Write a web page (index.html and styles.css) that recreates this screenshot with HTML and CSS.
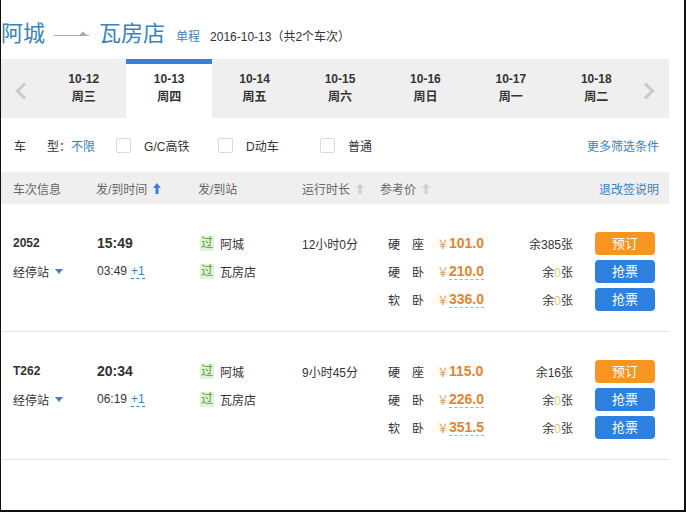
FILE: index.html
```html
<!DOCTYPE html>
<html lang="zh-CN">
<head>
<meta charset="utf-8">
<title>阿城 - 瓦房店</title>
<link rel="stylesheet" href="styles.css">
</head>
<body>
<div class="frame">
  <div class="page">
    <div class="title">
      <span class="city">阿城</span>
      <svg class="route-arrow" width="36" height="12" viewBox="0 0 36 12"><path d="M0 6.5 H35" stroke="#a9a9a9" stroke-width="1"/><path d="M25 6.5 L33 6.5 L29 2.5 Z" fill="#a9a9a9"/></svg>
      <span class="city">瓦房店</span>
      <span class="trip">单程</span>
      <span class="summary">2016-10-13（共2个车次）</span>
    </div>

    <div class="datebar">
      <div class="nav prev"><svg width="12" height="18" viewBox="0 0 12 18"><polyline points="10,1.5 2.5,9 10,16.5" fill="none" stroke="#c9c9c9" stroke-width="3"/></svg></div>
      <div class="day"><span>10-12</span><span>周三</span></div>
      <div class="day active"><span>10-13</span><span>周四</span></div>
      <div class="day"><span>10-14</span><span>周五</span></div>
      <div class="day"><span>10-15</span><span>周六</span></div>
      <div class="day"><span>10-16</span><span>周日</span></div>
      <div class="day"><span>10-17</span><span>周一</span></div>
      <div class="day"><span>10-18</span><span>周二</span></div>
      <div class="nav next"><svg width="12" height="18" viewBox="0 0 12 18"><polyline points="2,1.5 9.5,9 2,16.5" fill="none" stroke="#c9c9c9" stroke-width="3"/></svg></div>
    </div>

    <div class="filter">
      <span class="f-label">车</span><span class="f-label2">型：</span><span class="link">不限</span>
      <label class="opt first"><span class="box"></span>G/C高铁</label>
      <label class="opt"><span class="box"></span>D动车</label>
      <label class="opt"><span class="box"></span>普通</label>
      <span class="link more">更多筛选条件</span>
    </div>

    <div class="thead">
      <div class="c1">车次信息</div>
      <div class="c2">发/到时间<svg class="sort" width="8" height="11" viewBox="0 0 8 11"><path d="M4 0 L8 5 H5.5 V11 H2.5 V5 H0 Z" fill="#3a80d8"/></svg></div>
      <div class="c3">发/到站</div>
      <div class="c4">运行时长<svg class="sort" width="8" height="11" viewBox="0 0 8 11"><path d="M4 0 L8 5 H5.5 V11 H2.5 V5 H0 Z" fill="#d0d0d0"/></svg></div>
      <div class="c5">参考价<svg class="sort" width="8" height="11" viewBox="0 0 8 11"><path d="M4 0 L8 5 H5.5 V11 H2.5 V5 H0 Z" fill="#d0d0d0"/></svg><span class="link rule">退改签说明</span></div>
    </div>

    <div class="train">
      <div class="c1">
        <div class="line code">2052</div>
        <div class="line stops">经停站<svg class="down" width="8" height="5" viewBox="0 0 8 5"><path d="M0 0 H8 L4 5 Z" fill="#4d7fbf"/></svg></div>
      </div>
      <div class="c2">
        <div class="line dep">15:49</div>
        <div class="line">03:49<span class="plus">+1</span></div>
      </div>
      <div class="c3 st">
        <div class="line"><span class="badge">过</span>阿城</div>
        <div class="line"><span class="badge">过</span>瓦房店</div>
      </div>
      <div class="c4">
        <div class="line">12小时0分</div>
      </div>
      <div class="c5 prices">
        <div class="line"><span class="seat">硬座</span><span class="price"><span class="yen">￥</span><span class="num">101.0</span></span><span class="left">余385张</span><span class="btn book">预订</span></div>
        <div class="line"><span class="seat">硬卧</span><span class="price"><span class="yen">￥</span><span class="num dash">210.0</span></span><span class="left">余<em>0</em>张</span><span class="btn grab">抢票</span></div>
        <div class="line"><span class="seat">软卧</span><span class="price"><span class="yen">￥</span><span class="num dash">336.0</span></span><span class="left">余<em>0</em>张</span><span class="btn grab">抢票</span></div>
      </div>
    </div>

    <div class="train">
      <div class="c1">
        <div class="line code">T262</div>
        <div class="line stops">经停站<svg class="down" width="8" height="5" viewBox="0 0 8 5"><path d="M0 0 H8 L4 5 Z" fill="#4d7fbf"/></svg></div>
      </div>
      <div class="c2">
        <div class="line dep">20:34</div>
        <div class="line">06:19<span class="plus">+1</span></div>
      </div>
      <div class="c3 st">
        <div class="line"><span class="badge">过</span>阿城</div>
        <div class="line"><span class="badge">过</span>瓦房店</div>
      </div>
      <div class="c4">
        <div class="line">9小时45分</div>
      </div>
      <div class="c5 prices">
        <div class="line"><span class="seat">硬座</span><span class="price"><span class="yen">￥</span><span class="num">115.0</span></span><span class="left">余16张</span><span class="btn book">预订</span></div>
        <div class="line"><span class="seat">硬卧</span><span class="price"><span class="yen">￥</span><span class="num dash">226.0</span></span><span class="left">余<em>0</em>张</span><span class="btn grab">抢票</span></div>
        <div class="line"><span class="seat">软卧</span><span class="price"><span class="yen">￥</span><span class="num dash">351.5</span></span><span class="left">余<em>0</em>张</span><span class="btn grab">抢票</span></div>
      </div>
    </div>
  </div>
</div>
</body>
</html>
```

FILE: styles.css
```css
* { box-sizing: border-box; margin: 0; padding: 0; }
html, body { width: 686px; height: 512px; overflow: hidden; background: #fff; }
body {
  font-family: "Liberation Sans", "Noto Sans CJK SC", sans-serif;
  font-size: 12px;
  color: #333;
}
.frame {
  width: 686px;
  height: 512px;
  border-left: 1px solid #111;
  border-right: 2px solid #111;
  border-bottom: 2px solid #111;
}
.page { width: 668px; }

/* title */
.title {
  height: 59px;
  display: flex;
  align-items: baseline;
  padding-top: 16px;
}
.city {
  font-family: "Noto Sans CJK SC", sans-serif;
  font-size: 22px;
  line-height: 30px;
  color: #3a82be;
}
.route-arrow { margin: 0 9px 0 9px; }
.trip { margin-left: 11px; color: #3a7fc0; font-size: 12px; }
.summary { margin-left: 10px; color: #333; font-size: 12px; }

/* date bar */
.datebar {
  display: flex;
  height: 59px;
  background: #efefef;
}
.nav {
  display: flex;
  align-items: center;
  padding-top: 5px;
}
.nav.prev { width: 40px; justify-content: center; }
.nav.next { width: 30px; padding-left: 4px; }
.day {
  flex: 1;
  display: flex;
  flex-direction: column;
  align-items: center;
  border-top: 5px solid transparent;
  padding-top: 6px;
  font-weight: bold;
  line-height: 18px;
  color: #333;
}
.day.active { background: #fff; border-top-color: #3a7fd6; }

/* filter */
.filter {
  height: 54px;
  display: flex;
  align-items: center;
  padding: 0 10px 0 13px;
}
.f-label { margin-right: 21px; }
.link { color: #3a7fc0; }
.opt {
  width: 102px;
  display: flex;
  align-items: center;
  color: #333;
}
.opt.first { margin-left: 21px; }
.box {
  width: 15px;
  height: 15px;
  border: 1px solid #dadada;
  border-radius: 2px;
  background: #fff;
  margin-right: 13px;
}
.more { margin-left: auto; }

/* table header */
.thead {
  height: 32px;
  background: #efefef;
  display: flex;
  align-items: center;
  color: #666;
}
.c1 { width: 95px; padding-left: 12px; }
.c2 { width: 102px; }
.c3 { width: 104px; }
.c4 { width: 78px; }
.c5 { flex: 1; }
.thead > div { display: flex; align-items: center; }
.sort { margin-left: 6px; }
.thead .c5 { padding-right: 10px; }
.rule { margin-left: auto; }

/* train rows */
.train {
  display: flex;
  padding: 25px 0 18px;
  border-bottom: 1px solid #e4e4e4;
}
.line {
  height: 28px;
  display: flex;
  align-items: center;
}
.code { font-weight: bold; }
.down { margin-left: 6px; }
.dep { font-weight: bold; font-size: 14px; padding-left: 1px; }
.train .c2 .line { padding-left: 1px; }
.plus {
  margin-left: 4px;
  color: #3a7fc0;
  line-height: 14px;
  border-bottom: 1px dashed #3a7fc0;
}
.st { padding-left: 2px; }
.badge {
  width: 14px;
  height: 15px;
  line-height: 15px;
  text-align: center;
  background: #e2f2d8;
  color: #4c9c3a;
  margin-right: 6px;
  font-size: 12px;
}
.prices { padding-left: 8px; }
.seat { width: 49px; letter-spacing: 12px; }
.price { width: 60px; display: flex; align-items: center; }
.yen { color: #eb9a55; width: 12px; font-size: 12px; }
.num {
  color: #e5842f;
  font-weight: bold;
  font-size: 14px;
  line-height: 16px;
  border-bottom: 1px solid transparent;
}
.num.dash { border-bottom: 1px dashed #d9a27a; }
.left { width: 76px; text-align: right; }
.left em { font-style: normal; color: #f0c26c; }
.btn {
  margin-left: 22px;
  width: 60px;
  height: 23px;
  line-height: 23px;
  border-radius: 4px;
  text-align: center;
  color: #fff;
  font-size: 13px;
}
.book { background: #f8951f; }
.grab { background: #2d7fe0; }
```
